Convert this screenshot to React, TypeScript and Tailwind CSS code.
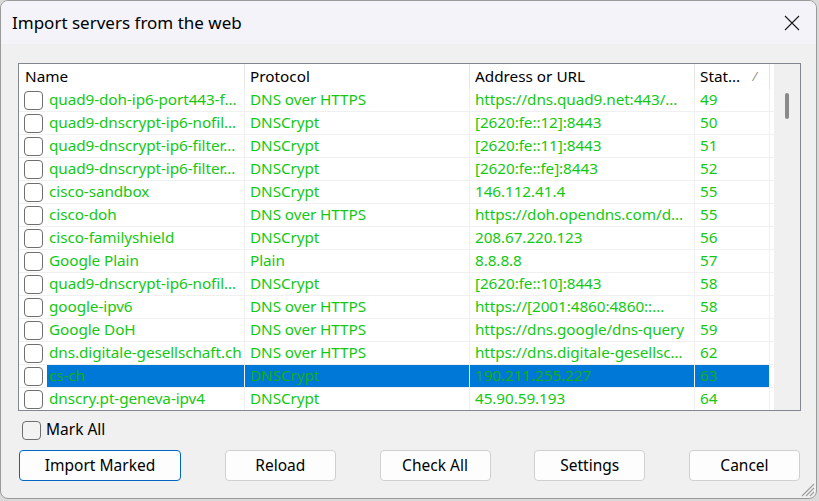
import React from "react"

type Server = { name: string; proto: string; addr: string; stamp: string }

const servers: Server[] = [
  { name: "quad9-doh-ip6-port443-f…", proto: "DNS over HTTPS", addr: "https://dns.quad9.net:443/…", stamp: "49" },
  { name: "quad9-dnscrypt-ip6-nofil…", proto: "DNSCrypt", addr: "[2620:fe::12]:8443", stamp: "50" },
  { name: "quad9-dnscrypt-ip6-filter…", proto: "DNSCrypt", addr: "[2620:fe::11]:8443", stamp: "51" },
  { name: "quad9-dnscrypt-ip6-filter…", proto: "DNSCrypt", addr: "[2620:fe::fe]:8443", stamp: "52" },
  { name: "cisco-sandbox", proto: "DNSCrypt", addr: "146.112.41.4", stamp: "55" },
  { name: "cisco-doh", proto: "DNS over HTTPS", addr: "https://doh.opendns.com/d…", stamp: "55" },
  { name: "cisco-familyshield", proto: "DNSCrypt", addr: "208.67.220.123", stamp: "56" },
  { name: "Google Plain", proto: "Plain", addr: "8.8.8.8", stamp: "57" },
  { name: "quad9-dnscrypt-ip6-nofil…", proto: "DNSCrypt", addr: "[2620:fe::10]:8443", stamp: "58" },
  { name: "google-ipv6", proto: "DNS over HTTPS", addr: "https://[2001:4860:4860::…", stamp: "58" },
  { name: "Google DoH", proto: "DNS over HTTPS", addr: "https://dns.google/dns-query", stamp: "59" },
  { name: "dns.digitale-gesellschaft.ch", proto: "DNS over HTTPS", addr: "https://dns.digitale-gesellsc…", stamp: "62" },
  { name: "cs-ch", proto: "DNSCrypt", addr: "190.211.255.227", stamp: "63" },
  { name: "dnscry.pt-geneva-ipv4", proto: "DNSCrypt", addr: "45.90.59.193", stamp: "64" },
]

const SELECTED = 12

function Box({ white }: { white?: boolean }) {
  return (
    <span
      className={`block h-[19px] w-[19px] shrink-0 rounded-[4px] border border-[#6f6f6f] ${
        white ? "bg-white" : "bg-[#f3f3f3]"
      }`}
    />
  )
}

function Button({ label, primary, wide }: { label: string; primary?: boolean; wide?: boolean }) {
  return (
    <button
      className={`flex h-[31px] items-center justify-center rounded-[4px] border bg-[#fdfdfd] text-[15.5px] text-black ${
        wide ? "w-[162px]" : "w-[111px]"
      } ${primary ? "border-[#0067c0]" : "border-[#d0d0d0]"}`}
    >
      {label}
    </button>
  )
}

export default function App() {
  return (
    <div className="h-[501px] w-[819px] bg-[#dadada] font-['Noto_Sans',sans-serif]">
      <div className="relative flex h-[499px] w-[817px] flex-col overflow-hidden rounded-lg border border-[#9a9a9a] bg-[#f0f0f0]">
        {/* title bar */}
        <div className="flex h-[43px] items-center justify-between bg-[#f3f3f9] pl-[11px] pr-[16px]">
          <span className="whitespace-nowrap text-[17px] text-black">Import servers from the web</span>
          <svg width="16" height="16" viewBox="0 0 16 16" className="mt-[1px]">
            <path d="M1 1 L15 15 M15 1 L1 15" stroke="#1a1a1a" strokeWidth="1.1" fill="none" />
          </svg>
        </div>

        {/* server list */}
        <div className="ml-[17px] mt-[19px] flex h-[348px] w-[783px] overflow-hidden border border-[#828790] bg-white">
          <div className="flex w-[755px] flex-col">
            <div className="grid h-[25px] shrink-0 grid-cols-[226px_225px_225px_75px_4px] text-[15.3px] text-black">
              <div className="flex items-center border-r border-[#e5e5e5] pl-[6px]">Name</div>
              <div className="flex items-center border-r border-[#e5e5e5] pl-[5px]">Protocol</div>
              <div className="flex items-center border-r border-[#e5e5e5] pl-[5px]">Address or URL</div>
              <div className="flex items-center border-r border-[#e5e5e5] pl-[5px]">
                <span>Stat…</span>
                <span className="ml-[14px] text-[12px] text-[#777]">⁄</span>
              </div>
              <div />
            </div>
            {servers.map((s, i) => {
              const sel = i === SELECTED
              const cell = sel ? "bg-[#0078d7] text-[#10b010]" : "text-[#14c814]"
              return (
                <div
                  key={i}
                  className="grid h-[23px] shrink-0 grid-cols-[226px_225px_225px_75px_4px] border-b border-[#f0f0f0] text-[15.3px] leading-none tracking-[-0.08px]"
                >
                  <div className="flex items-center overflow-hidden border-r border-[#f0f0f0]">
                    <div className="flex h-full w-[28px] shrink-0 items-center pl-[5px]">
                      <Box white />
                    </div>
                    <div className={`flex h-full flex-1 items-center overflow-hidden whitespace-nowrap pl-[2px] ${cell}`}>
                      {s.name}
                    </div>
                  </div>
                  <div className={`flex items-center overflow-hidden whitespace-nowrap border-r border-[#f0f0f0] pl-[5px] ${cell}`}>
                    {s.proto}
                  </div>
                  <div className={`flex items-center overflow-hidden whitespace-nowrap border-r border-[#f0f0f0] pl-[5px] ${cell}`}>
                    {s.addr}
                  </div>
                  <div className={`flex items-center overflow-hidden whitespace-nowrap border-r border-[#f0f0f0] pl-[5px] ${cell}`}>
                    {s.stamp}
                  </div>
                  <div />
                </div>
              )
            })}
          </div>
          {/* scrollbar track */}
          <div className="flex w-[26px] justify-center bg-[#f0f0f0] pt-[29px]">
            <div className="h-[26px] w-[4px] rounded-full bg-[#8a8a8a]" />
          </div>
        </div>

        {/* mark all */}
        <div className="ml-[21px] mt-[9px] flex h-[20px] items-center gap-[5px] text-[15.5px] text-black">
          <Box />
          <span>Mark All</span>
        </div>

        {/* actions */}
        <div className="ml-[18px] mt-[10px] flex w-[781px] justify-between">
          <Button label="Import Marked" primary wide />
          <Button label="Reload" />
          <Button label="Check All" />
          <Button label="Settings" />
          <Button label="Cancel" />
        </div>

        {/* size grip */}
        <svg width="16" height="16" viewBox="0 0 16 16" className="absolute bottom-[1px] right-[1px]">
          <path d="M15 3 L3 15 M15 7 L7 15 M15 11 L11 15" stroke="#a0a0a0" strokeWidth="1.2" fill="none" />
        </svg>
      </div>
    </div>
  )
}
